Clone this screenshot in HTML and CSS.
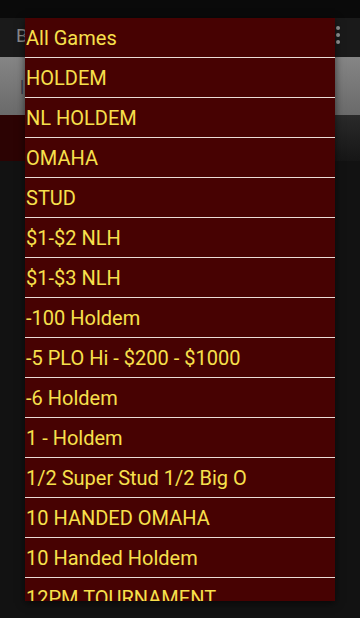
FILE: index.html
```html
<!DOCTYPE html>
<html lang="en">
<head>
  <meta charset="UTF-8" />
  <meta name="viewport" content="width=device-width, initial-scale=1.0"/>
  <title>Games</title>
  <link rel="stylesheet" href="styles.css">
</head>
<body>

  <div class="status-bar"></div>

  <header class="toolbar">
    <div class="toolbar-title">B</div>
    <div class="toolbar-menu">
      <span></span><span></span><span></span>
    </div>
  </header>

  <section class="filter-bar">
    <div class="filter-input">|</div>
  </section>

  <section class="tab-strip">
    <div class="tab-active"></div>
    <div class="tab-rest"></div>
  </section>

  <main class="content"></main>

  <!-- spinner popup, open -->
  <ul class="game-dropdown">
    <li>All Games</li>
    <li>HOLDEM</li>
    <li>NL HOLDEM</li>
    <li>OMAHA</li>
    <li>STUD</li>
    <li>$1-$2 NLH</li>
    <li>$1-$3 NLH</li>
    <li>-100 Holdem</li>
    <li>-5 PLO Hi - $200 - $1000</li>
    <li>-6 Holdem</li>
    <li>1 - Holdem</li>
    <li>1/2 Super Stud 1/2 Big O</li>
    <li>10 HANDED OMAHA</li>
    <li>10 Handed Holdem</li>
    <li>12PM TOURNAMENT</li>
  </ul>

</body>
</html>
```

FILE: styles.css
```css
* {
  margin: 0;
  padding: 0;
  box-sizing: border-box;
  font-family: Roboto, 'Noto Sans', sans-serif;
}

body {
  background-color: #131313;
  width: 360px;
  height: 618px;
  overflow: hidden;
}

.status-bar {
  height: 18px;
  background-color: #0a0a0a;
}

.toolbar {
  height: 39px;
  background-color: #1a1a1a;
  display: flex;
  align-items: center;
  justify-content: space-between;
  padding: 0 16px 0 16px;
}

.toolbar-title {
  color: #8a8a8a;
  font-size: 19px;
  margin-top: -4px;
}

.toolbar-menu {
  display: flex;
  flex-direction: column;
  gap: 3px;
  margin-top: -6px;
  margin-right: 4px;
}

.toolbar-menu span {
  width: 4px;
  height: 4px;
  border-radius: 50%;
  background-color: #9a9a9a;
}

.filter-bar {
  height: 58px;
  background: linear-gradient(#858585, #6a6a6a);
  display: flex;
  align-items: center;
  padding-left: 20px;
}

.filter-input {
  color: #3a3a4a;
  font-size: 16px;
  font-weight: bold;
}

.tab-strip {
  height: 46px;
  display: flex;
}

.tab-active {
  width: 60px;
  background-color: #2c0303;
}

.tab-rest {
  flex: 1;
  background: linear-gradient(#2a2a2a, #161616);
}

.content {
  height: 457px;
  background-color: #121212;
}

.game-dropdown {
  position: absolute;
  top: 18px;
  left: 25px;
  width: 310px;
  height: 583px;
  overflow: hidden;
  list-style: none;
  background-color: #470202;
  box-shadow: 0 2px 8px rgba(0, 0, 0, 0.6);
}

.game-dropdown li {
  height: 40px;
  line-height: 40px;
  padding-left: 1px;
  border-bottom: 1px solid #eadbd6;
  color: #f7e04c;
  font-size: 20px;
  white-space: nowrap;
}
```
